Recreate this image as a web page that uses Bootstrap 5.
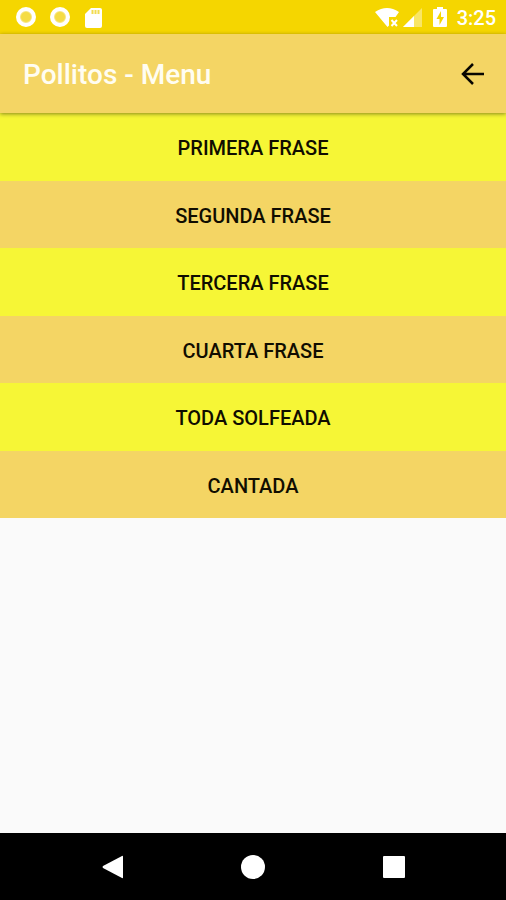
<!DOCTYPE html>
<html lang="es">
<head>
<meta charset="utf-8">
<meta name="viewport" content="width=device-width, initial-scale=1">
<title>Pollitos - Menu</title>
<link href="https://cdn.jsdelivr.net/npm/bootstrap@5.3.0/dist/css/bootstrap.min.css" rel="stylesheet">
<style>
  body { font-family: Roboto, "Liberation Sans", sans-serif; background: #fafafa; }
  .plain { background: none; border: 0; padding: 0; }
  .status-bar { height: 34px; padding: 0 10px 0 15px; background: #f5d600; color: #fff; }
  .clock { font-size: 20px; line-height: 24px; font-weight: 500; margin-top: 2px; }
  .app-bar { height: 79px; padding: 0 20px 0 23px; background: #f4d564; box-shadow: 0 1px 4px rgba(0,0,0,.45); z-index: 1; }
  .app-title { font-size: 28px; line-height: 32px; font-weight: 500; color: #fffdf2; margin-top: 3px; }
  .phrase { height: 67px; padding-top: 2px; font-size: 20px; line-height: 24px; font-weight: 500; color: #100d00; background: #f4d564; }
  .phrase:nth-child(odd) { height: 68px; background: #f6f636; }
  .nav-keys { height: 67px; padding: 0 42px; background: #000; }
</style>
<script src="https://cdn.jsdelivr.net/npm/bootstrap@5.3.0/dist/js/bootstrap.bundle.min.js" defer></script>
</head>
<body class="d-flex flex-column min-vh-100">
  <div class="status-bar d-flex justify-content-between align-items-center">
    <div class="d-flex align-items-center">
      <svg width="90" height="24" viewBox="0 0 90 24" aria-hidden="true">
        <circle cx="11" cy="12" r="8" fill="#f7e582" stroke="#fff" stroke-width="4"/>
        <circle cx="11" cy="12" r="5" fill="#f5dc45"/>
        <circle cx="45" cy="12" r="8" fill="#f7e582" stroke="#fff" stroke-width="4"/>
        <circle cx="45" cy="12" r="5" fill="#f5dc45"/>
        <path d="M76 3h9q2 0 2 2v16q0 2-2 2H72q-2 0-2-2V9z" fill="#fff"/>
        <path d="M77.500 5v4M80.500 5v4M83.500 5v4" stroke="#f2dc50" stroke-width="2"/>
      </svg>
    </div>
    <div class="d-flex align-items-center">
      <svg width="74" height="24" viewBox="0 0 74 24" aria-hidden="true">
        <path d="M0 7Q12-1 24 7L20.500 12H14V20.500L12.500 22z" fill="#fff"/>
        <path d="M16.500 15l5.500 6M22 15l-5.500 6" stroke="#fff" stroke-width="2"/>
        <path d="M28 22L47 3V22z" fill="#fff" fill-opacity=".4"/>
        <path d="M28 22L39 11V22z" fill="#fff"/>
        <path d="M62 2h6v2h3q1 0 1 1v16q0 1-1 1H59q-1 0-1-1V5q0-1 1-1h3z" fill="#fff"/>
        <path d="M66 6l-4.500 8h3v6l4.500-8h-3z" fill="#f5d600"/>
      </svg>
      <span class="clock ms-2">3:25</span>
    </div>
  </div>
  <header class="app-bar d-flex justify-content-between align-items-center position-relative">
    <h1 class="app-title mb-0">Pollitos - Menu</h1>
    <button class="plain d-flex" type="button" aria-label="Volver">
      <svg width="26" height="26" viewBox="0 0 26 26" fill="none" stroke="#080600" stroke-width="2.500"><path d="M24 13H4M13 3L3 13l10 10"/></svg>
    </button>
  </header>
  <main class="d-flex flex-column flex-grow-1">
    <button class="plain phrase w-100" type="button">PRIMERA FRASE</button>
    <button class="plain phrase w-100" type="button">SEGUNDA FRASE</button>
    <button class="plain phrase w-100" type="button">TERCERA FRASE</button>
    <button class="plain phrase w-100" type="button">CUARTA FRASE</button>
    <button class="plain phrase w-100" type="button">TODA SOLFEADA</button>
    <button class="plain phrase w-100" type="button">CANTADA</button>
  </main>
  <nav class="nav-keys d-flex" aria-label="Sistema">
    <button class="plain flex-fill" type="button" aria-label="Atrás"><svg width="24" height="24" viewBox="0 0 24 24"><path d="M23 1.500v21q0 1-1 .5L3 13q-1-1 0-2L22 1q1-.5 1 .5z" fill="#fff"/></svg></button>
    <button class="plain flex-fill" type="button" aria-label="Inicio"><svg width="24" height="24" viewBox="0 0 24 24"><circle cx="12" cy="12" r="12" fill="#fff"/></svg></button>
    <button class="plain flex-fill" type="button" aria-label="Recientes"><svg width="24" height="24" viewBox="0 0 24 24"><rect x="1" y="1" width="22" height="22" rx="1" fill="#fff"/></svg></button>
  </nav>
</body>
</html>
